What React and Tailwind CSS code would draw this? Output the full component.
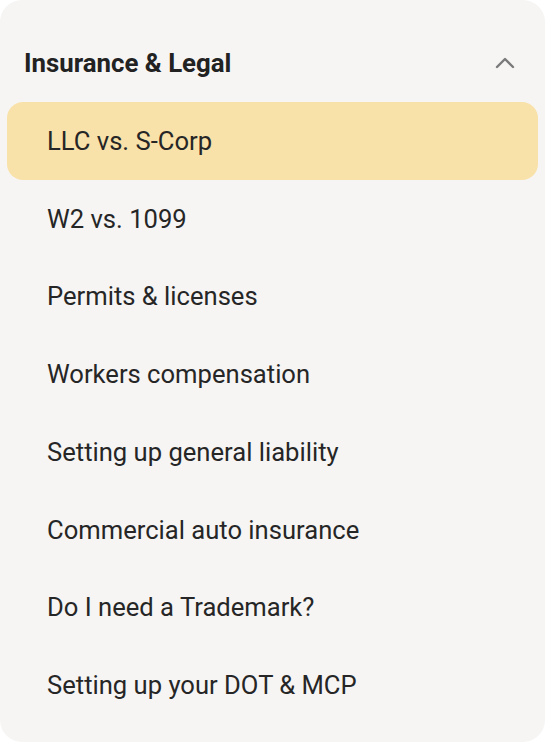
import { useState } from 'react';

const ITEMS = [
  'LLC vs. S-Corp',
  'W2 vs. 1099',
  'Permits & licenses',
  'Workers compensation',
  'Setting up general liability',
  'Commercial auto insurance',
  'Do I need a Trademark?',
  'Setting up your DOT & MCP',
];

export default function App() {
  const [active, setActive] = useState(0);

  return (
    <div className="w-[545px] h-[742px] bg-white" style={{ fontFamily: 'Roboto, "Noto Sans", sans-serif' }}>
      <div className="h-full rounded-[22px] bg-[#f6f5f4] px-[7px] pt-6">
        {/* header */}
        <div className="h-[78px] flex items-center justify-between pl-[17px] pr-[23px]">
          <h2 className="text-[25.8px] font-bold text-[#222]">Insurance &amp; Legal</h2>
          <svg width="20" height="12" viewBox="0 0 20 12" fill="none" stroke="#7a7a7a" strokeWidth="2.4" strokeLinecap="round" strokeLinejoin="round">
            <path d="M2 10 L10 2 L18 10" />
          </svg>
        </div>

        <div className="flex flex-col">
          {ITEMS.map((item, i) => (
            <button
              key={item}
              onClick={() => setActive(i)}
              className={`h-[77.8px] flex items-center pl-10 rounded-[16px] text-left text-[25.6px] text-[#262626] ${i === active ? 'bg-[#f9e2a9]' : ''}`}
            >
              {item}
            </button>
          ))}
        </div>
      </div>
    </div>
  );
}
